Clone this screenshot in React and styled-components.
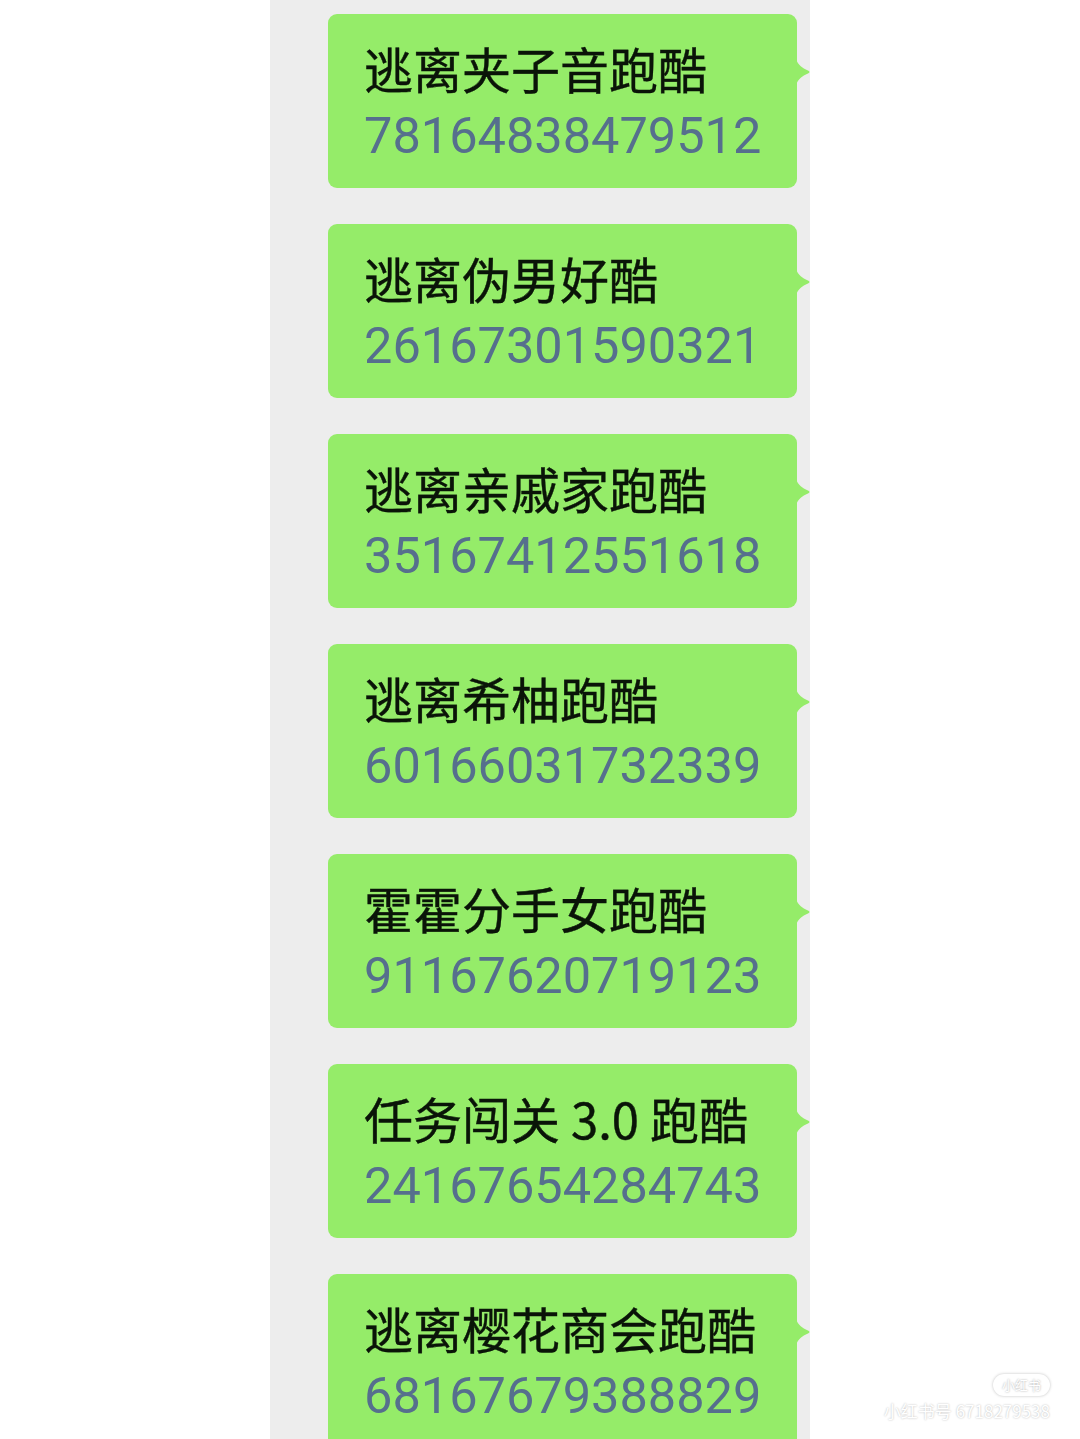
import React from 'react';
import styled, { createGlobalStyle } from 'styled-components';

const GlobalStyle = createGlobalStyle`
  body {
    margin: 0;
    background: #ffffff;
    font-family: "Noto Sans CJK SC", sans-serif;
  }
`;

const rooms = [
  { name: '逃离夹子音跑酷', code: '78164838479512' },
  { name: '逃离伪男好酷', code: '26167301590321' },
  { name: '逃离亲戚家跑酷', code: '35167412551618' },
  { name: '逃离希柚跑酷', code: '60166031732339' },
  { name: '霍霍分手女跑酷', code: '91167620719123' },
  { name: '任务闯关 3.0 跑酷', code: '24167654284743' },
  { name: '逃离樱花商会跑酷', code: '68167679388829' },
];

export default function App() {
  return (
    <>
      <GlobalStyle />
      <Page>
        <Chat>
          {rooms.map((r) => (
            <Bubble key={r.code}>
              <Title>{r.name}</Title>
              <Code>{r.code}</Code>
              <Tail width="14" height="26" viewBox="0 0 14 26">
                <path d="M0 0 C2 6 6 9 12 11.5 C14 12.4 14 13.6 12 14.5 C6 17 2 20 0 26 Z" fill="#95EC69" />
              </Tail>
            </Bubble>
          ))}
        </Chat>
        <Watermark>
          <Logo>小红书</Logo>
          <MarkText>小红书号 6718279538</MarkText>
        </Watermark>
      </Page>
    </>
  );
}

const Page = styled.div`
  position: relative;
  width: 1080px;
  height: 1439px;
  overflow: hidden;
`;

const Chat = styled.div`
  margin-left: 270px;
  width: 540px;
  height: 1439px;
  background: #ededed;
  box-sizing: border-box;
  padding: 14px 0 0 58px;
  display: flex;
  flex-direction: column;
  gap: 36px;
`;

const Bubble = styled.div`
  position: relative;
  width: 469px;
  height: 174px;
  flex-shrink: 0;
  box-sizing: border-box;
  padding: 22px 0 0 36px;
  background: #95ec69;
  border-radius: 9px;
`;

const Title = styled.div`
  font-family: "Noto Sans CJK SC", sans-serif;
  font-size: 49px;
  font-weight: 400;
  line-height: 63px;
  color: #0a1408;
  -webkit-text-stroke: 0.4px #0a1408;
  white-space: nowrap;
`;

const Code = styled.div`
  margin-top: 5px;
  font-family: Roboto, "Noto Sans", sans-serif;
  font-size: 50.5px;
  line-height: 63px;
  color: #566f8d;
  white-space: nowrap;
`;

const Tail = styled.svg`
  position: absolute;
  right: -13px;
  top: 45px;
`;

const Watermark = styled.div`
  position: absolute;
  right: 30px;
  bottom: 18px;
  display: flex;
  flex-direction: column;
  align-items: flex-end;
  gap: 5px;
`;

const Logo = styled.div`
  font-family: "Noto Sans CJK SC", sans-serif;
  font-size: 13px;
  line-height: 22px;
  padding: 0 9px;
  color: #ffffff;
  border-radius: 11px;
  background: #ffffff;
  box-shadow: 0 0 3px rgba(0, 0, 0, 0.25);
  text-shadow: 0 0 2px rgba(0, 0, 0, 0.4);
`;

const MarkText = styled.div`
  font-family: "Noto Sans CJK SC", sans-serif;
  font-size: 17px;
  line-height: 20px;
  color: #ffffff;
  text-shadow: 0 0 2px rgba(0, 0, 0, 0.3);
`;
